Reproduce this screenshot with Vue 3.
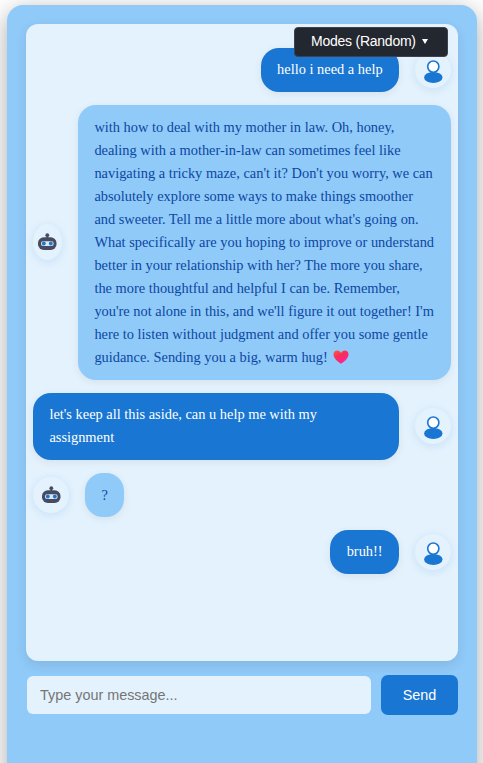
<script setup>
const messages = [
  { from: 'user', lines: ['hello i need a help'] },
  {
    from: 'bot',
    long: true,
    heart: true,
    lines: [
      'with how to deal with my mother in law. Oh, honey,',
      'dealing with a mother-in-law can sometimes feel like',
      "navigating a tricky maze, can't it? Don't you worry, we can",
      'absolutely explore some ways to make things smoother',
      "and sweeter. Tell me a little more about what's going on.",
      'What specifically are you hoping to improve or understand',
      'better in your relationship with her? The more you share,',
      'the more thoughtful and helpful I can be. Remember,',
      "you're not alone in this, and we'll figure it out together! I'm",
      'here to listen without judgment and offer you some gentle',
      'guidance. Sending you a big, warm hug!',
    ],
  },
  { from: 'user', long: true, lines: ["let's keep all this aside, can u help me with my", 'assignment'] },
  { from: 'bot', lines: ['?'] },
  { from: 'user', lines: ['bruh!!'] },
]
</script>

<template>
  <main class="page">
    <section class="card">
      <button class="modes">Modes (Random)<span class="caret"></span></button>
      <div class="panel">
        <div v-for="(m, i) in messages" :key="i" class="row" :class="[m.from, { long: m.long }]">
          <div class="avatar">
            <svg v-if="m.from === 'user'" width="36" height="36" viewBox="0 0 36 36">
              <ellipse cx="18.3" cy="25.4" rx="9.2" ry="5.5" fill="#1976d2" />
              <circle cx="18.3" cy="14.6" r="5.6" fill="#fff" stroke="#1976d2" stroke-width="1.6" />
            </svg>
            <svg v-else width="36" height="36" viewBox="0 0 36 36">
              <circle cx="18.3" cy="11.2" r="1.9" fill="#474b60" />
              <path d="M18.3 12v4" stroke="#474b60" stroke-width="1.3" />
              <rect x="9" y="13.2" width="18.5" height="12.8" rx="5.8" fill="#474b60" />
              <rect x="12" y="17.2" width="12.6" height="4.7" rx="2" fill="#dfe6ee" />
              <circle cx="14.8" cy="19.5" r="1.9" fill="#1976d2" />
              <circle cx="21.8" cy="19.5" r="1.9" fill="#1976d2" />
            </svg>
          </div>
          <div class="bubble">
            <div v-for="(line, j) in m.lines" :key="j" class="line">
              <span>{{ line }}</span>
              <svg v-if="m.heart && j === m.lines.length - 1" class="heart" width="16" height="14" viewBox="0 0 16 14">
                <defs>
                  <linearGradient id="heartFill" x1="0" y1="0" x2="0.6" y2="1">
                    <stop offset="0" stop-color="#ff5a4a" />
                    <stop offset="0.45" stop-color="#f72f55" />
                    <stop offset="1" stop-color="#ff1fa0" />
                  </linearGradient>
                </defs>
                <path d="M8 13.7C5 12 .5 8.5.5 4.3.5 2 2.2.5 4.2.5 5.9.5 7.3 1.4 8 3 8.7 1.4 10.1.5 11.8.5c2 0 3.7 1.5 3.7 3.8C15.5 8.5 11 12 8 13.7z" fill="url(#heartFill)" />
              </svg>
            </div>
          </div>
        </div>
      </div>
      <form class="composer" @submit.prevent>
        <input type="text" placeholder="Type your message..." />
        <button class="send">Send</button>
      </form>
    </section>
  </main>
</template>

<style>
body { background: #fff; overflow: hidden; }
</style>

<style scoped>
* { box-sizing: border-box; }
.page {
  height: 763px;
  padding: 5px 6px 0 7px;
  overflow: hidden;
}
.card {
  position: relative;
  height: 790px;
  padding: 19px;
  border-radius: 16px;
  background: #90caf9;
  box-shadow: 0 6px 24px rgba(0, 0, 0, 0.34);
}
.modes {
  position: absolute;
  top: 22px;
  right: 29px;
  width: 154px;
  height: 30px;
  padding: 0 0 2px 16px;
  display: flex;
  align-items: center;
  border: 1px solid #3e4150;
  border-radius: 4px;
  background: #23272f;
  color: #fff;
  font: 14px "Liberation Sans", Arial, sans-serif;
  letter-spacing: -0.24px;
  white-space: nowrap;
}
.caret {
  margin-left: 6px;
  border: 3px solid transparent;
  border-top: 5px solid #fff;
  border-bottom: 0;
}
.panel {
  height: 637px;
  padding: 24px 7px;
  display: flex;
  flex-direction: column;
  gap: 13.05px;
  border-radius: 12px;
  background: #e3f2fd;
  box-shadow: 0 4px 12px rgba(0, 0, 0, 0.1);
}
.row {
  display: flex;
  align-items: center;
  gap: 16px;
}
.row.user { flex-direction: row-reverse; }
.avatar {
  flex: none;
  display: flex;
  align-items: center;
  justify-content: center;
  width: 36px;
  height: 36px;
  border-radius: 50%;
  background: #e3f2fd;
  box-shadow: 0 2px 8px rgba(25, 118, 210, 0.13);
}
.avatar svg { flex: none; }
.bot.long .avatar { width: 29px; padding-right: 1px; }
.bubble {
  padding: 11px 16.4px 10.1px;
  border-radius: 18px;
  font: 14.4px/23.04px "Liberation Serif", "Times New Roman", serif;
  white-space: nowrap;
  box-shadow: 0 2px 8px rgba(0, 0, 0, 0.07);
}
.long .bubble { flex: 1; min-width: 0; }
.user .bubble { padding-top: 10.4px; padding-bottom: 10.7px; background: #1976d2; color: #fff; }
.bot .bubble { background: #90caf9; color: #0d47a1; }
.line { height: 23.04px; }
.heart { margin-left: 5px; vertical-align: -2px; }
.composer {
  display: flex;
  align-items: center;
  gap: 10px;
  margin-top: 14px;
  padding-left: 1px;
}
.composer input {
  flex: 1;
  min-width: 0;
  height: 38px;
  padding: 0 13px;
  border: 0;
  border-radius: 6px;
  background: #e3f2fd;
  font: 14.4px "Liberation Sans", Arial, sans-serif;
}
.composer input::placeholder { color: #757575; }
.send {
  width: 77px;
  height: 40px;
  padding: 0;
  border: 0;
  border-radius: 7px;
  background: #1976d2;
  color: #fff;
  font: 14.4px "Liberation Sans", Arial, sans-serif;
}
</style>
